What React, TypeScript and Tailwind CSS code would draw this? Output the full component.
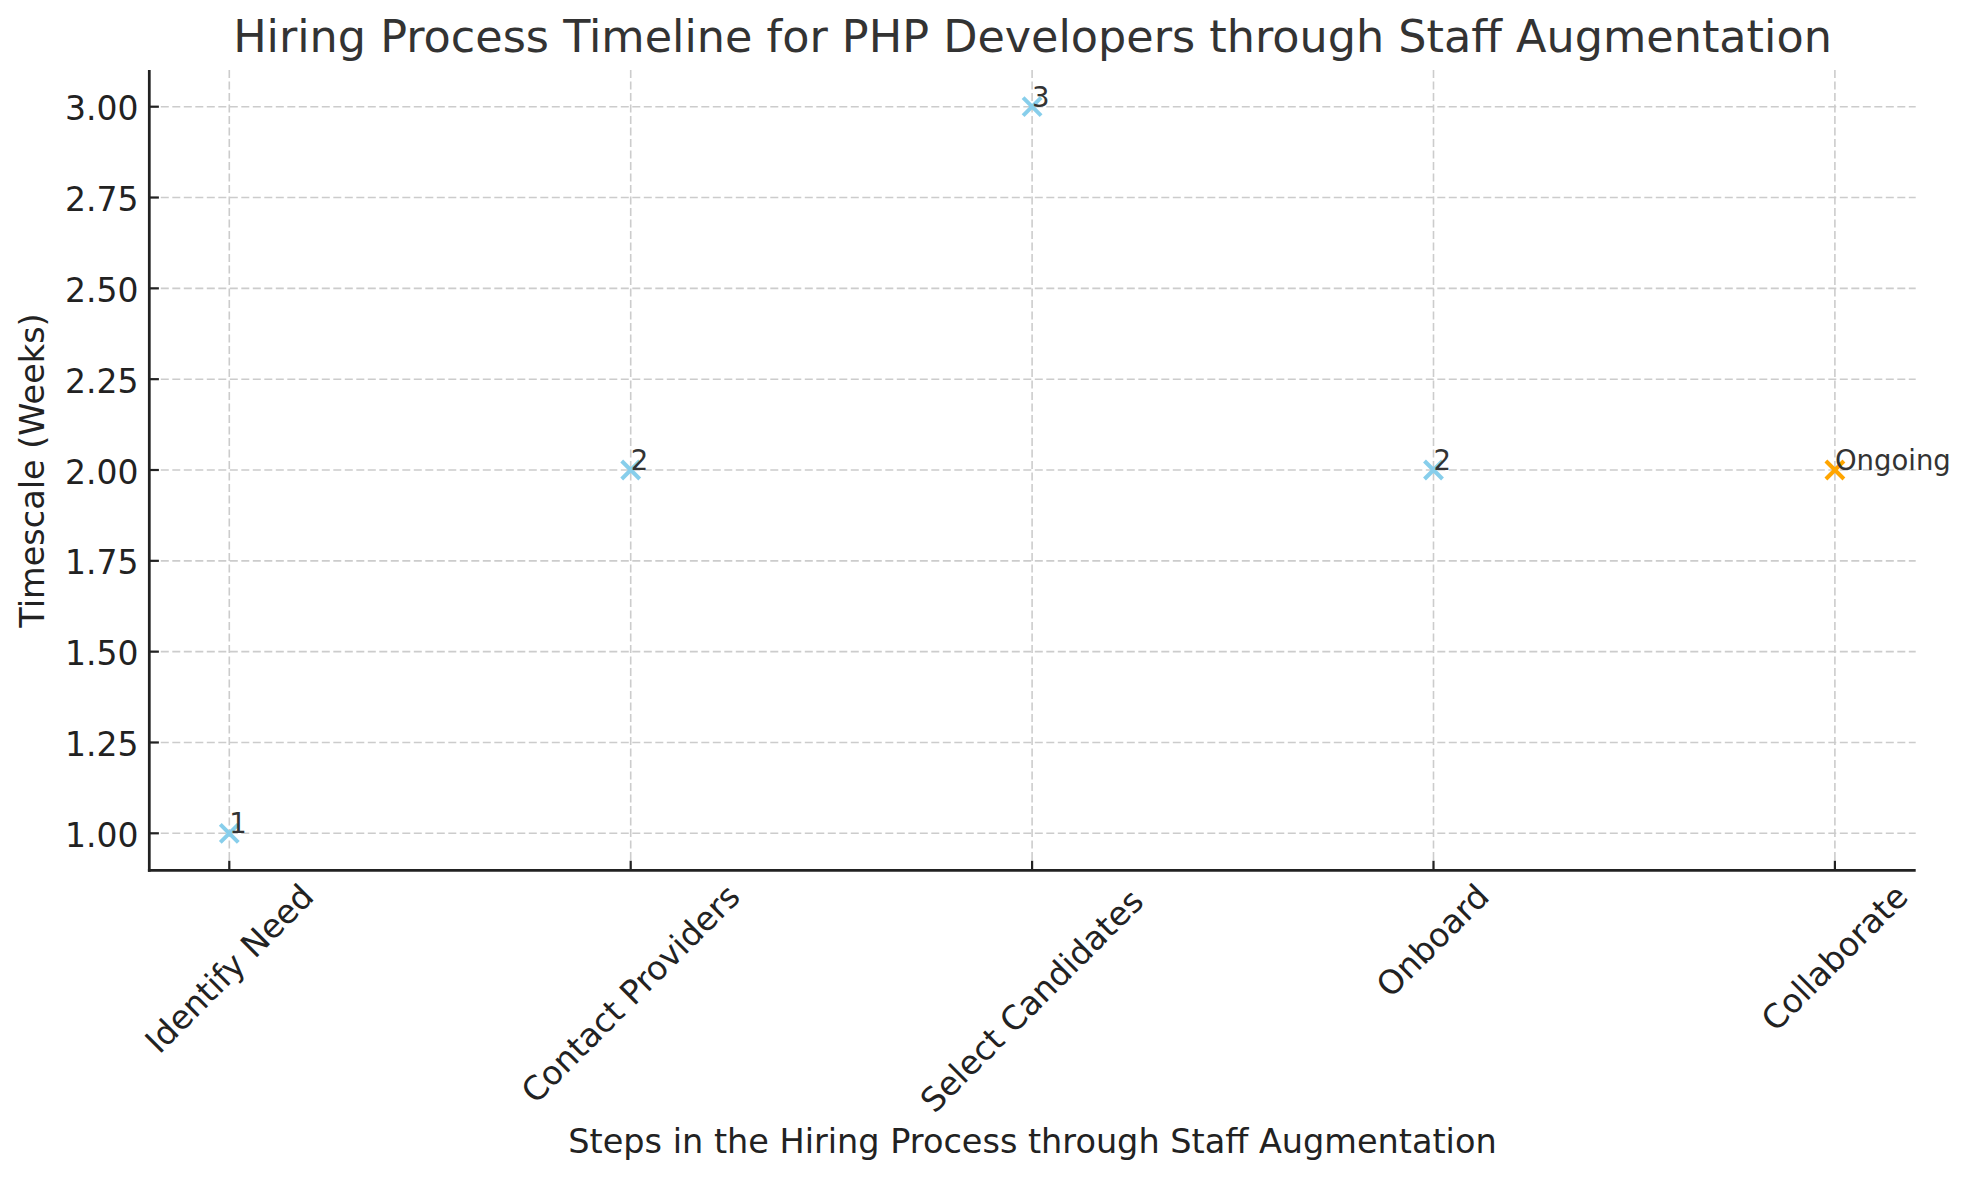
import React from "react";

type Step = { name: string; v: number; label: string; em: number; color: string };

const steps: Step[] = [
  { name: "Identify Need", v: 1, label: "1", em: 6.724, color: "#87CEEB" },
  { name: "Contact Providers", v: 2, label: "2", em: 8.887, color: "#87CEEB" },
  { name: "Select Candidates", v: 3, label: "3", em: 9.437, color: "#87CEEB" },
  { name: "Onboard", v: 2, label: "2", em: 4.327, color: "#87CEEB" },
  { name: "Collaborate", v: 2, label: "Ongoing", em: 5.757, color: "#FFA500" },
];

const yTicks = [1, 1.25, 1.5, 1.75, 2, 2.25, 2.5, 2.75, 3];

// chart-local coordinates (page x - 65, page y - 70)
const X0 = 84.3;
const X1 = 1850.7;
const Y0 = 0;
const Y1 = 800.3;
const xOf = (i: number) => 164.3 + i * 401.4;
const yOf = (v: number) => 763.3 - (v - 1) * 363.3;

const TICK_FONT = 33;
const TICK_LH = 38;

export default function App() {
  return (
    <div className="w-[1970px] h-[1180px] bg-white flex flex-col font-['DejaVu_Sans',sans-serif] text-[#222222]">
      <div className="h-[70px] w-[1916px] pl-[149px] pt-[15px] text-center text-[44.5px] leading-[44px] text-[#333333] whitespace-nowrap">
        Hiring Process Timeline for PHP Developers through Staff Augmentation
      </div>
      <div className="flex h-[1055px]">
        <div className="w-[65px] h-[800px] flex items-center justify-center shrink-0">
          <span className="-rotate-90 whitespace-nowrap text-[33.5px] leading-[33px]">Timescale (Weeks)</span>
        </div>
        <div className="relative flex-1 h-full">
          <svg className="absolute left-0 top-0 overflow-visible" width={1905} height={1055}>
            {yTicks.map((v) => (
              <line
                key={"hg" + v}
                x1={X0}
                x2={X1}
                y1={yOf(v)}
                y2={yOf(v)}
                stroke="#cccccc"
                strokeWidth={1.6}
                strokeDasharray="8 3.5"
              />
            ))}
            {steps.map((s, i) => (
              <line
                key={"vg" + i}
                x1={xOf(i)}
                x2={xOf(i)}
                y1={Y0}
                y2={Y1}
                stroke="#cccccc"
                strokeWidth={1.6}
                strokeDasharray="8 3.5"
              />
            ))}
            {yTicks.map((v) => (
              <line key={"yt" + v} x1={X0} x2={X0 + 9.6} y1={yOf(v)} y2={yOf(v)} stroke="#222222" strokeWidth={2.2} />
            ))}
            {steps.map((s, i) => (
              <line key={"xt" + i} x1={xOf(i)} x2={xOf(i)} y1={Y1} y2={Y1 - 9.6} stroke="#222222" strokeWidth={2.2} />
            ))}
            <line x1={X0} x2={X0} y1={Y0} y2={Y1 + 1.4} stroke="#222222" strokeWidth={2.75} />
            <line x1={X0 - 1.4} x2={X1} y1={Y1} y2={Y1} stroke="#222222" strokeWidth={2.75} />
            {steps.map((s, i) => {
              const x = xOf(i);
              const y = yOf(s.v);
              return (
                <g key={"m" + i} stroke={s.color} strokeWidth={4}>
                  <line x1={x - 9} y1={y - 9} x2={x + 9} y2={y + 9} />
                  <line x1={x - 9} y1={y + 9} x2={x + 9} y2={y - 9} />
                </g>
              );
            })}
          </svg>

          {yTicks.map((v) => (
            <div
              key={"yl" + v}
              className="absolute left-0 w-[72px] text-right text-[33px] leading-[32px] whitespace-nowrap"
              style={{ top: yOf(v) - 13.4 }}
            >
              {v.toFixed(2)}
            </div>
          ))}

          {steps.map((s, i) => (
            <div
              key={"an" + i}
              className="absolute text-[27.5px] leading-[27px] text-[#333333] whitespace-nowrap"
              style={{ left: xOf(i), top: yOf(s.v) - 23 }}
            >
              {s.label}
            </div>
          ))}

          {steps.map((s, i) => {
            const S = (s.em * TICK_FONT + TICK_LH) / Math.SQRT2;
            return (
              <div
                key={"xl" + i}
                className="absolute flex items-center justify-center"
                style={{ left: xOf(i) - S / 2, top: 807, width: S, height: S }}
              >
                <span className="-rotate-45 whitespace-nowrap text-[33px] leading-[38px]">{s.name}</span>
              </div>
            );
          })}
        </div>
      </div>
      <div className="h-[55px] w-[1916px] pl-[149px] text-center text-[33.5px] leading-[33px] whitespace-nowrap">
        Steps in the Hiring Process through Staff Augmentation
      </div>
    </div>
  );
}
